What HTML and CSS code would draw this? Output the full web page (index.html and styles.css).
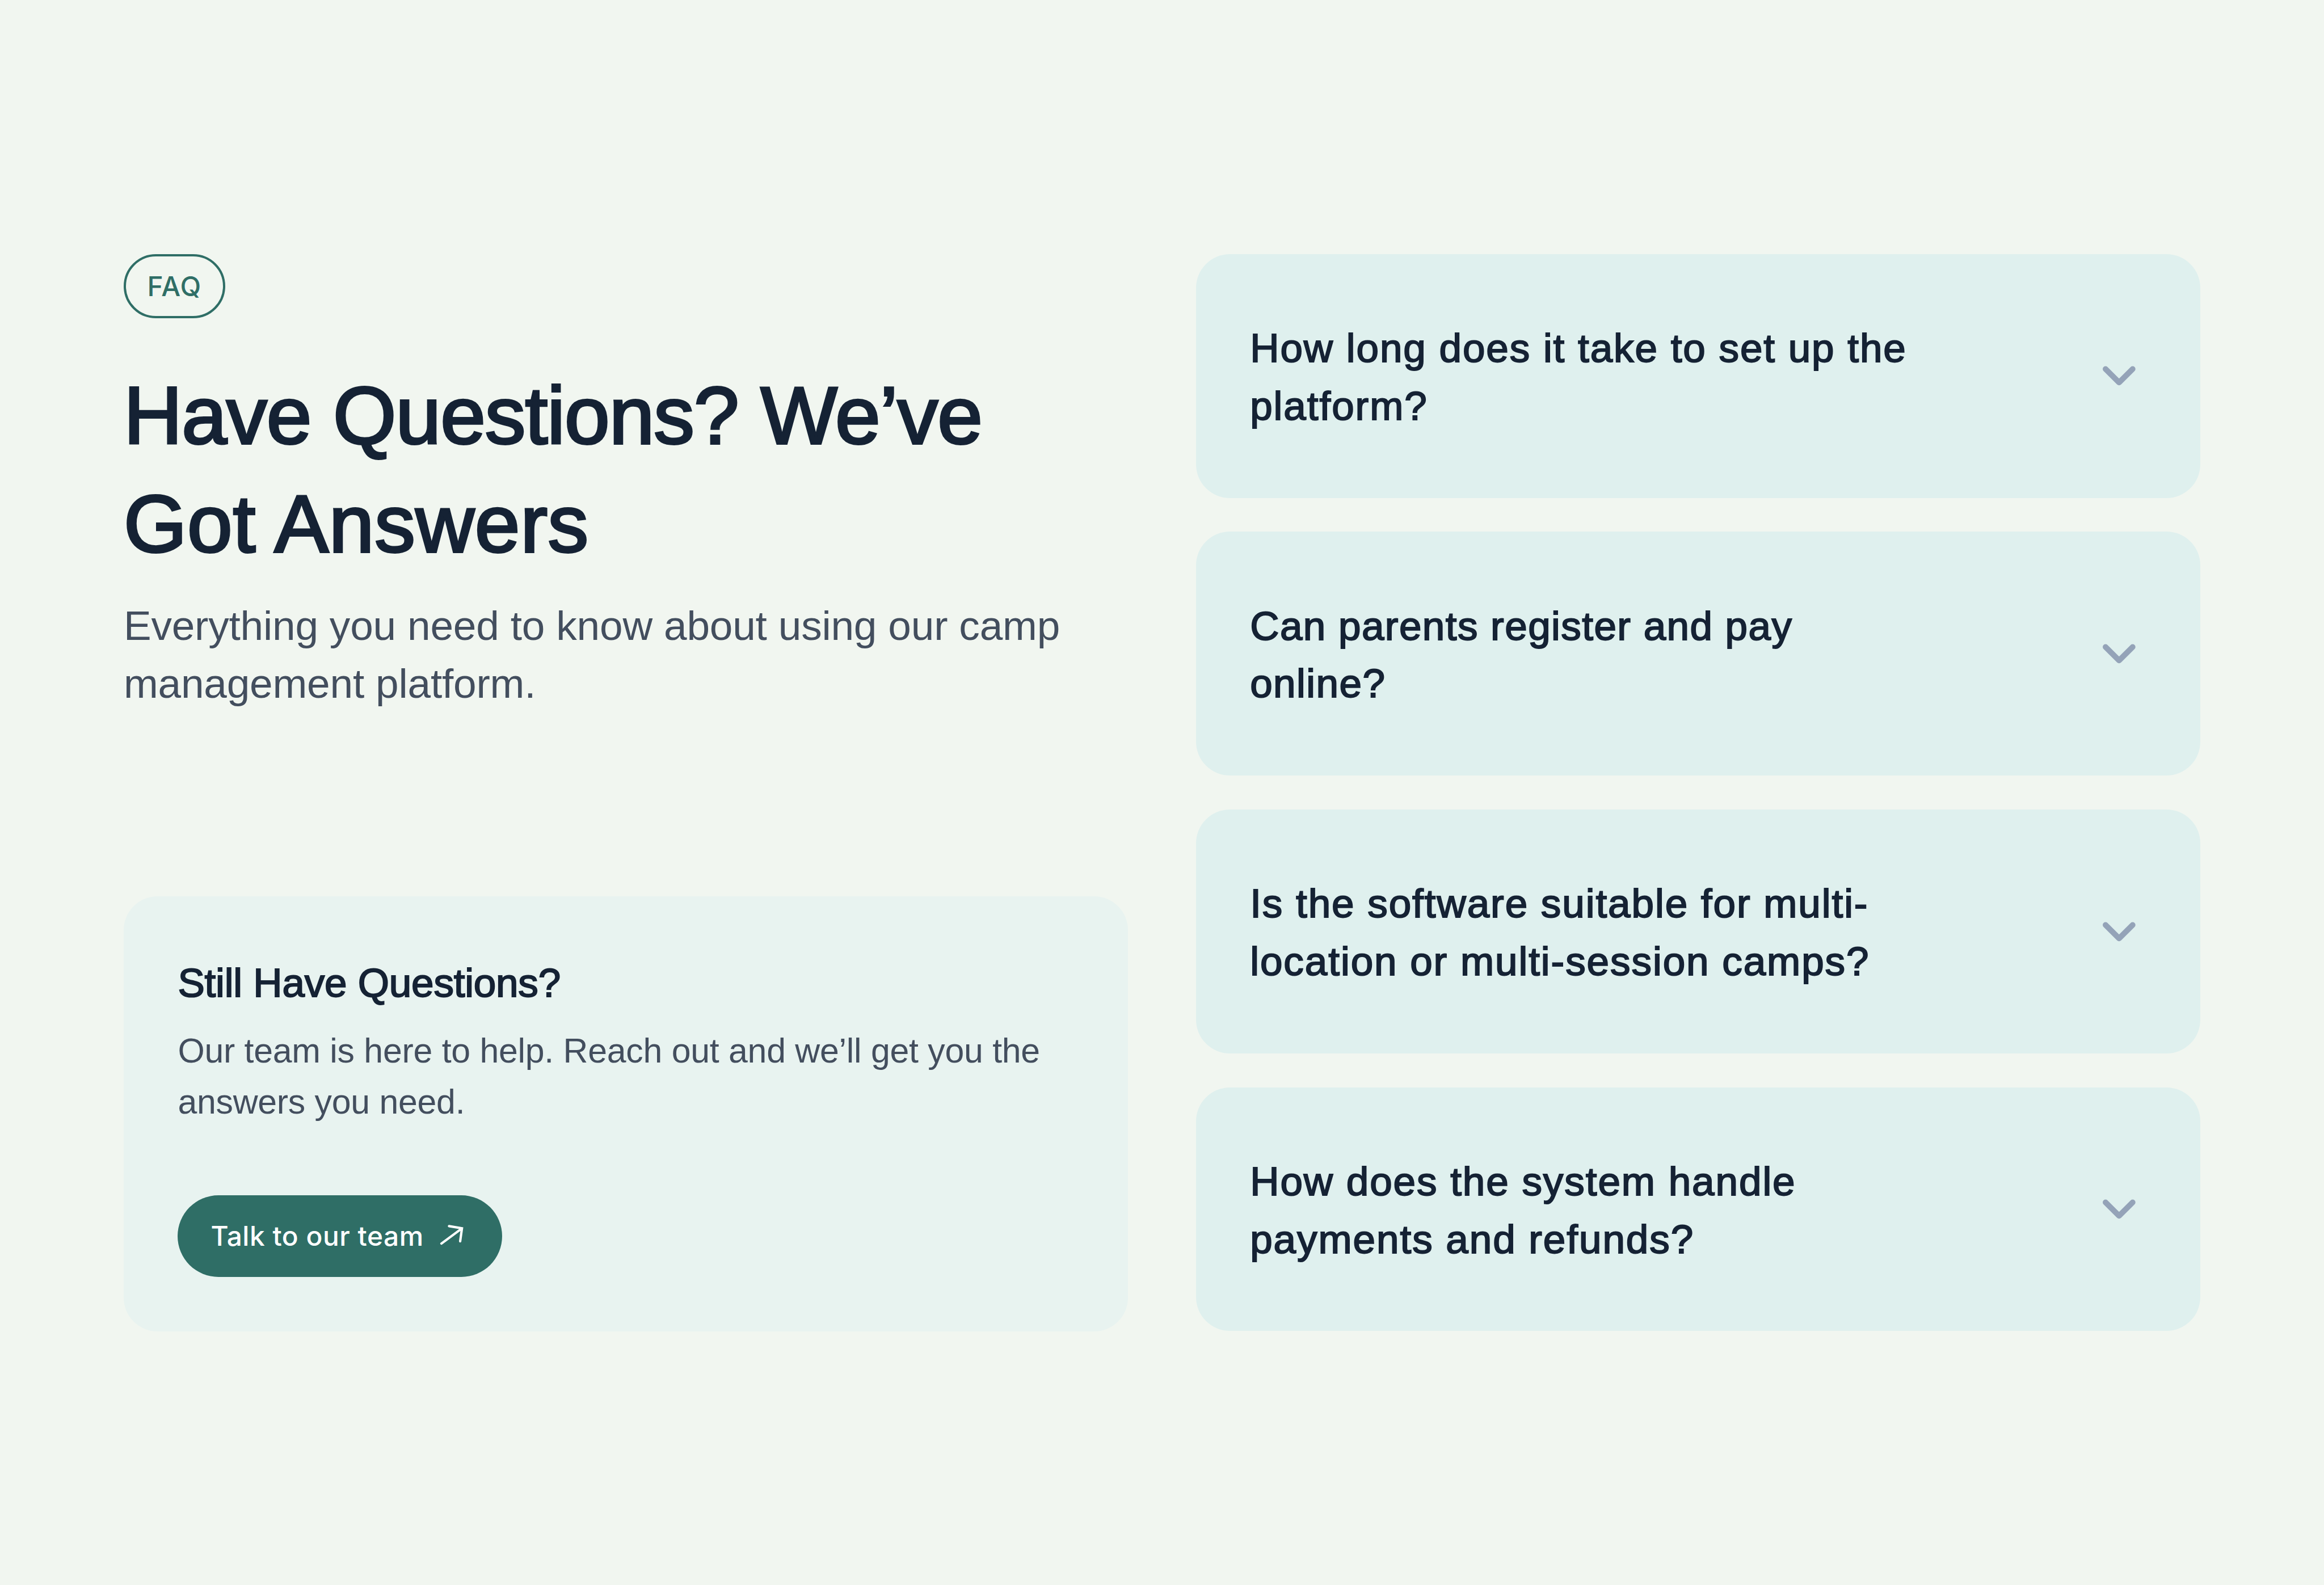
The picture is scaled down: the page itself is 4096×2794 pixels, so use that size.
FILE: index.html
```
<!DOCTYPE html>
<html lang="en">
<head>
    <meta charset="utf-8">
    <title>FAQ</title>
    <link rel="stylesheet" href="styles.css">
</head>
<body>
    <section class="faq">
        <div class="intro">
            <div class="intro-text">
                <span class="badge">FAQ</span>
                <h2 class="title"><span class="title-first">Have Questions? We’ve</span><br>Got Answers</h2>
                <p class="subtitle">Everything you need to know about using our camp<br>management platform.</p>
            </div>
            <div class="contact">
                <h3 class="contact-title">Still Have Questions?</h3>
                <p class="contact-text">Our team is here to help. Reach out and we’ll get you the<br>answers you need.</p>
                <a class="button" href="#">
                    Talk to our team
                    <svg class="arrow" viewBox="0 0 43 39">
                        <path d="M3 33.3 L39 6.6 M16.5 2.4 L39.4 6.2 L36.2 29.3"/>
                    </svg>
                </a>
            </div>
        </div>
        <div class="questions">
            <div class="question">
                <h3 class="question-text">How long does it take to set up the<br>platform?</h3>
                <svg class="chevron" viewBox="0 0 60 37"><path d="M6 6.5 L30 30.5 L54 6.5"/></svg>
            </div>
            <div class="question">
                <h3 class="question-text question-tight">Can parents register and pay<br>online?</h3>
                <svg class="chevron" viewBox="0 0 60 37"><path d="M6 6.5 L30 30.5 L54 6.5"/></svg>
            </div>
            <div class="question">
                <h3 class="question-text">Is the software suitable for multi-<br>location or multi-session camps?</h3>
                <svg class="chevron" viewBox="0 0 60 37"><path d="M6 6.5 L30 30.5 L54 6.5"/></svg>
            </div>
            <div class="question">
                <h3 class="question-text">How does the system handle<br>payments and refunds?</h3>
                <svg class="chevron" viewBox="0 0 60 37"><path d="M6 6.5 L30 30.5 L54 6.5"/></svg>
            </div>
        </div>
    </section>
</body>
</html>
```
FILE: styles.css
```
* {
    box-sizing: border-box;
}
body {
    margin: 0;
    background: #f1f6f0;
    font-family: "Liberation Sans", Arial, sans-serif;
    color: #152234;
}
h2, h3, p {
    margin: 0;
    font-weight: 400;
    white-space: nowrap;
}
.faq {
    display: grid;
    grid-template-columns: 1fr 1fr;
    gap: 119.4px;
    height: 2794px;
    padding: 447.8px 217.9px 447.5px;
}
.intro {
    display: flex;
    flex-direction: column;
    justify-content: space-between;
}
.badge {
    display: flex;
    align-items: center;
    justify-content: center;
    width: 179.1px;
    height: 113.5px;
    border: 4.5px solid #2f6e66;
    border-radius: 60px;
    font: 500 47.8px Inter, sans-serif;
    letter-spacing: 1.1px;
    color: #2f6e66;
}
.title {
    margin-top: 75.4px;
    font-size: 143.3px;
    line-height: 191.2px;
    letter-spacing: 0.7px;
    -webkit-text-stroke: 4px #152234; /* medium weight */
}
.title-first {
    letter-spacing: -1.03px;
}
.subtitle {
    margin-top: 33.2px;
    font-size: 73px;
    line-height: 101.5px;
    letter-spacing: -0.2px;
    color: #434e5e;
}
.contact {
    height: 766.2px;
    padding: 101.5px 95.5px 0;
    border-radius: 59.7px;
    background: #e8f3f0;
}
.contact-title {
    font-size: 71px;
    line-height: 101.5px;
    letter-spacing: -0.2px;
    -webkit-text-stroke: 2px #152234;
}
.contact-text {
    margin-top: 25px;
    font-size: 60.8px;
    line-height: 89.6px;
    letter-spacing: -0.26px;
    color: #434e5e;
}
.button {
    display: flex;
    align-items: center;
    gap: 28.5px;
    width: 571.2px;
    height: 144.3px;
    margin-top: 119.1px;
    padding-left: 58px;
    border-radius: 73px;
    background: #2f6e66;
    font: 450 47.8px Inter, sans-serif;
    letter-spacing: 0.55px;
    color: #fff;
    text-decoration: none;
    white-space: nowrap;
}
.arrow {
    width: 42.8px;
    height: 38.8px;
    fill: none;
    stroke: #fff;
    stroke-width: 4.2;
    stroke-linecap: round;
}
.questions {
    display: flex;
    flex-direction: column;
    gap: 59.7px;
}
.question {
    display: flex;
    flex: 1;
    align-items: center;
    justify-content: space-between;
    padding: 0 113.4px 0 95.5px;
    border-radius: 59.7px;
    background: #dff0ee;
}
.question-text {
    padding-top: 4px;
    font-size: 71px;
    line-height: 101.5px;
    letter-spacing: 1.95px;
    -webkit-text-stroke: 2px #152234;
}
.question-tight {
    letter-spacing: 1.45px;
}
.chevron {
    width: 59.7px;
    height: 36.8px;
    fill: none;
    stroke: #94a3b8;
    stroke-width: 10;
    stroke-linecap: round;
    stroke-linejoin: round;
}
```
